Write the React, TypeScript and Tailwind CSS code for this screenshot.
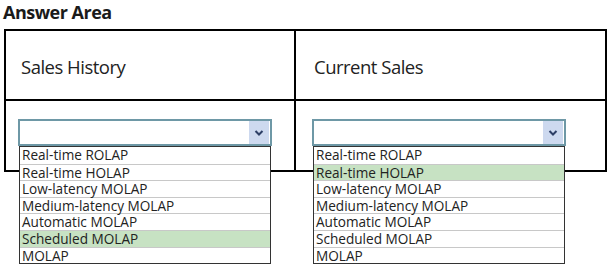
const options = [
  "Real-time ROLAP",
  "Real-time HOLAP",
  "Low-latency MOLAP",
  "Medium-latency MOLAP",
  "Automatic MOLAP",
  "Scheduled MOLAP",
  "MOLAP",
];

function Dropdown({ selected }: { selected: string }) {
  return (
    <div className="relative w-[254px]">
      <div className="flex h-[27px] items-center justify-end border-2 border-[#6e98a6] bg-white pr-[1px]">
        <div className="flex h-[23px] w-[20px] items-center justify-center bg-[#cdd9ef]">
          <svg viewBox="0 0 10 8" className="h-[8px] w-[10px]">
            <path d="M1.5 2 L5 5.5 L8.5 2" stroke="#2d3f66" strokeWidth="2" fill="none" />
          </svg>
        </div>
      </div>
      <ul className="absolute left-[1px] top-[27px] w-[252px] border border-[#333] bg-white">
        {options.map((opt, i) => (
          <li
            key={opt}
            className={`h-[16.6px] pl-[2px] text-[13.6px] leading-[15.4px] text-[#222] ${
              i > 0 ? "border-t border-[#c8c8c8]" : ""
            } ${opt === selected ? "bg-[#c7e2c3]" : ""}`}
          >
            {opt}
          </li>
        ))}
      </ul>
    </div>
  );
}

export default function App() {
  return (
    <div className="h-[269px] w-[611px] bg-white font-['Open_Sans',sans-serif] text-[#1a1a1a]">
      <div className="pl-[3px] pt-[1px] text-[18px] font-bold leading-[22px] tracking-[-0.5px]">
        Answer Area
      </div>
      <div className="ml-[4px] mt-[6px] grid w-[603px] grid-cols-[290px_1fr] border-2 border-black">
        <div className="flex h-[70px] items-center border-r-2 border-b-2 border-black pl-[15px] pt-[3px] text-[18.5px] tracking-[-0.5px] text-[#222]">
          Sales History
        </div>
        <div className="flex h-[70px] items-center border-b-2 border-black pl-[18px] pt-[3px] text-[18.5px] tracking-[-0.5px] text-[#222]">
          Current Sales
        </div>
        <div className="h-[69px] border-r-2 border-black pl-[12px] pt-[18px]">
          <Dropdown selected="Scheduled MOLAP" />
        </div>
        <div className="h-[69px] pl-[16px] pt-[18px]">
          <Dropdown selected="Real-time HOLAP" />
        </div>
      </div>
    </div>
  );
}
